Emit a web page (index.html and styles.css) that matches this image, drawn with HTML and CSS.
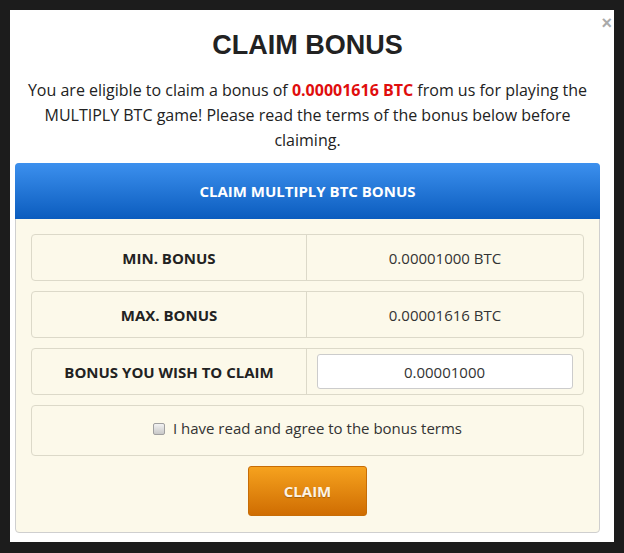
FILE: index.html
```html
<!DOCTYPE html>
<html lang="en">
<head>
  <meta charset="UTF-8" />
  <title>Claim Bonus</title>
  <link rel="stylesheet" href="styles.css">
</head>
<body>
  <div class="modal">
    <span class="close">&times;</span>
    <h2 class="modal-title">CLAIM BONUS</h2>
    <p class="intro">You are eligible to claim a bonus of <span class="amount">0.00001616 BTC</span> from us for playing the MULTIPLY BTC game! Please read the terms of the bonus below before claiming.</p>
    <div class="panel">
      <div class="panel-head">CLAIM MULTIPLY BTC BONUS</div>
      <div class="panel-body">
        <div class="row">
          <div class="cell label">MIN. BONUS</div>
          <div class="cell value">0.00001000 BTC</div>
        </div>
        <div class="row">
          <div class="cell label">MAX. BONUS</div>
          <div class="cell value">0.00001616 BTC</div>
        </div>
        <div class="row">
          <div class="cell label">BONUS YOU WISH TO CLAIM</div>
          <div class="cell value"><input type="text" class="amount-input" value="0.00001000" /></div>
        </div>
        <div class="row terms">
          <label><input type="checkbox" /> I have read and agree to the bonus terms</label>
        </div>
        <button class="claim-btn">CLAIM</button>
      </div>
    </div>
  </div>
</body>
</html>
```

FILE: styles.css
```css
body {
  margin: 0;
  padding: 10px 10px 11px;
  background-color: #1c1c1c;
  font-family: 'Open Sans', sans-serif;
  color: #222;
}
.modal {
  position: relative;
  background: #fff;
  width: 604px;
  height: 532px;
  box-sizing: border-box;
  padding: 19px 14px 0 5px;
}
.close {
  position: absolute;
  top: 3px;
  right: 2px;
  font-family: 'Liberation Sans', Arial, sans-serif;
  font-size: 18px;
  font-weight: bold;
  color: #aaa;
  line-height: 20px;
}
.modal-title {
  margin: 0;
  text-align: center;
  font-family: 'Liberation Sans', Arial, sans-serif;
  font-size: 27px;
  line-height: 32px;
  font-weight: bold;
  color: #222;
}
.intro {
  margin: 17px 0 10px;
  padding: 0 6px;
  text-align: center;
  font-size: 16px;
  line-height: 25px;
  color: #222;
}
.amount {
  color: #e00d0d;
  font-weight: bold;
}
.panel {
  border: 1px solid #cfcfcf;
  border-radius: 4px;
  background: #fcf9ea;
  height: 370px;
  box-sizing: border-box;
}
.panel-head {
  height: 56px;
  line-height: 56px;
  margin: -1px -1px 0;
  border-radius: 4px 4px 0 0;
  background: linear-gradient(to bottom, #3c90ee, #0b5cbe);
  color: #fff;
  font-weight: bold;
  font-size: 15px;
  text-align: center;
}
.panel-body {
  padding: 15px 15px;
  display: flex;
  flex-direction: column;
  gap: 10px;
}
.row {
  display: grid;
  grid-template-columns: 275px 1fr;
  height: 47px;
  border: 1px solid #dcd9c9;
  border-radius: 4px;
  box-sizing: border-box;
  font-size: 15px;
}
.cell {
  display: flex;
  align-items: center;
  justify-content: center;
}
.label {
  font-weight: bold;
  color: #222;
  border-right: 1px solid #dcd9c9;
}
.value {
  color: #333;
}
.amount-input {
  width: 256px;
  height: 35px;
  box-sizing: border-box;
  margin-right: 1px;
  border: 1px solid #ccc;
  border-radius: 3px;
  background: #fff;
  text-align: center;
  font-family: inherit;
  font-size: 15px;
  color: #333;
}
.terms {
  display: flex;
  align-items: center;
  justify-content: center;
  height: 51px;
  padding-bottom: 6px;
  font-size: 15px;
  color: #333;
}
.terms input {
  appearance: none;
  width: 12px;
  height: 12px;
  margin: 0 4px 0 0;
  border: 1px solid #a0a0a0;
  border-radius: 2px;
  background: linear-gradient(to bottom, #f2f2f2, #c8c8c8);
  vertical-align: -1px;
}
.claim-btn {
  align-self: center;
  width: 119px;
  height: 50px;
  border: 1px solid #c76d06;
  border-radius: 3px;
  background: linear-gradient(to bottom, #f6a21e, #cf6d02);
  color: #fdf3e3;
  font-family: inherit;
  font-weight: bold;
  font-size: 15px;
  text-shadow: 0 1px 1px rgba(0, 0, 0, 0.25);
}
```
